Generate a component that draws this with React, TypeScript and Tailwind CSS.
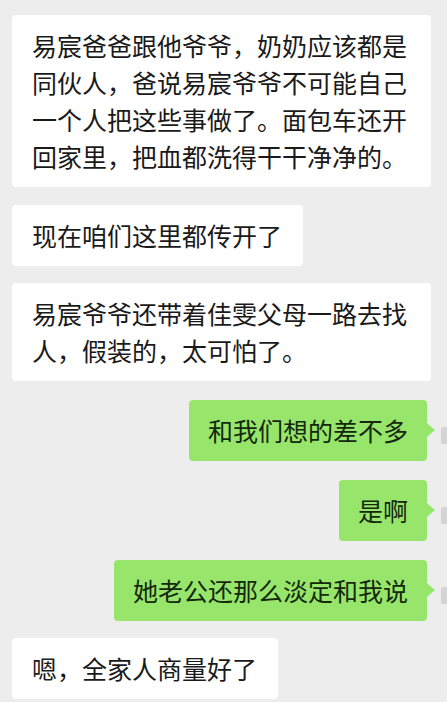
import React from "react";

type Msg = { side: "left" | "right"; text: string; mt: number };

const messages: Msg[] = [
  { side: "left", text: "易宸爸爸跟他爷爷，奶奶应该都是同伙人，爸说易宸爷爷不可能自己一个人把这些事做了。面包车还开回家里，把血都洗得干干净净的。", mt: 15 },
  { side: "left", text: "现在咱们这里都传开了", mt: 18 },
  { side: "left", text: "易宸爷爷还带着佳雯父母一路去找人，假装的，太可怕了。", mt: 17 },
  { side: "right", text: "和我们想的差不多", mt: 19 },
  { side: "right", text: "是啊", mt: 19 },
  { side: "right", text: "她老公还那么淡定和我说", mt: 19 },
  { side: "left", text: "嗯，全家人商量好了", mt: 17 },
];

const mtClass: Record<number, string> = {
  15: "mt-[15px]",
  17: "mt-[17px]",
  18: "mt-[18px]",
  19: "mt-[19px]",
};

function LeftBubble({ text }: { text: string }) {
  return (
    <div className="flex justify-start pl-[12px]">
      <div className="max-w-[419px] rounded-[4px] bg-white py-[12px] pl-[20px] pr-[21px] text-[25px] leading-[37px] text-[#1a1a1a]">
        {text}
      </div>
    </div>
  );
}

function RightBubble({ text }: { text: string }) {
  return (
    <div className="flex items-start justify-end">
      <div className="relative rounded-[4px] bg-[#97e66b] px-[19px] py-[12px] text-[25px] leading-[37px] text-[#13280d]">
        {text}
        <span className="absolute right-[-8px] top-[23px] h-0 w-0 border-y-[7px] border-l-[8px] border-y-transparent border-l-[#97e66b]" />
      </div>
      <div className="ml-[14px] mt-[27px] h-[17px] w-[6px] rounded-l-[2px] bg-[#d4d4d4]" />
    </div>
  );
}

export default function App() {
  return (
    <div
      className="h-[702px] w-[447px] overflow-hidden bg-[#ededed]"
      style={{ fontFamily: '"Noto Sans CJK SC", "Noto Sans", sans-serif' }}
    >
      {messages.map((m, i) => (
        <div key={i} className={mtClass[m.mt]}>
          {m.side === "left" ? <LeftBubble text={m.text} /> : <RightBubble text={m.text} />}
        </div>
      ))}
    </div>
  );
}
